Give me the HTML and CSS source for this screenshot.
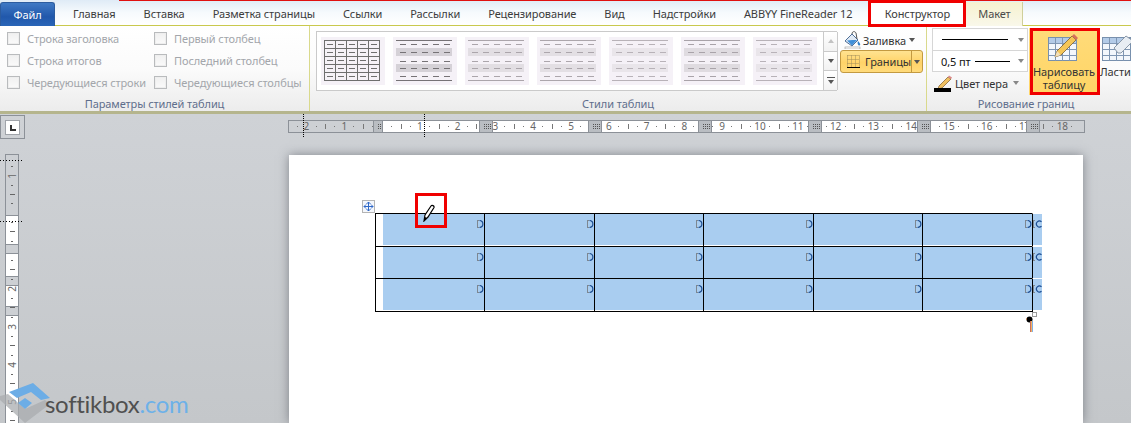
FILE: index.html
```html
<!DOCTYPE html>
<html lang="ru">
<head>
<meta charset="utf-8">
<title>Word</title>
<link rel="stylesheet" href="styles.css">
</head>
<body>
<svg class="defs" width="0" height="0">
  <symbol id="th-band" viewBox="0 0 64 48">
    <rect class="sb" x="3" y="11" width="56" height="8"/>
    <rect class="sb" x="3" y="27" width="56" height="8"/>
    <path class="sl" d="M3 3.500H59M3 43.500H59"/>
    <path class="sd" d="M7 7.500H57M7 15.500H57M7 24.500H57M7 31.500H57M7 39.500H57"/>
  </symbol>
  <symbol id="th-grid" viewBox="0 0 64 48">
    <path class="sl" d="M3 3.500H59M3 11.500H59M3 19.500H59M3 27.500H59M3 35.500H59M3 43.500H59M3.500 3V44M14.500 3V44M25.500 3V44M36.500 3V44M47.500 3V44M58.500 3V44"/>
    <path class="sd" d="M6 7.500H57M6 15.500H57M6 23.500H57M6 31.500H57M6 39.500H57"/>
  </symbol>
  <symbol id="mark" viewBox="0 0 7 8">
    <path d="M0 .5H2M0 7.500H2M.5 1V7" fill="none" stroke="#7d8791"/>
    <path d="M2.500 .5C7 1 7 7 2.500 7.500" fill="none" stroke="#1c4d92" stroke-width="1.200"/>
  </symbol>
  <symbol id="mark2" viewBox="0 0 9 8">
    <path d="M0 .5H2M0 7.500H2M.5 1V7" fill="none" stroke="#7d8791"/>
    <path d="M8.500 1.800A3 3 0 1 0 8.500 6.200" fill="none" stroke="#1c4d92" stroke-width="1.200"/>
  </symbol>
  <symbol id="tbl" viewBox="0 0 30 25">
    <rect x=".5" y=".5" width="28" height="23" fill="#f3f7fc" stroke="#7890ad"/>
    <rect x="1" y="1" width="27" height="5" fill="#b3cbe8"/>
    <path d="M.5 6.500H28.500M.5 12.500H28.500M.5 18.500H28.500M7.500 1V24M14.500 1V24M21.500 1V24" stroke="#7f96b3" fill="none"/>
  </symbol>
</svg>

<header class="tabs">
  <div class="redline"></div>
  <span class="tab file">Файл</span>
  <span class="tab">Главная</span>
  <span class="tab">Вставка</span>
  <span class="tab">Разметка страницы</span>
  <span class="tab">Ссылки</span>
  <span class="tab">Рассылки</span>
  <span class="tab">Рецензирование</span>
  <span class="tab">Вид</span>
  <span class="tab">Надстройки</span>
  <span class="tab">ABBYY FineReader 12</span>
  <span class="tab active">Конструктор</span>
  <span class="tab ctx">Макет</span>
</header>

<section class="ribbon">
  <div class="group g1">
    <div class="gbody checks">
      <label class="chk"><i></i>Строка заголовка</label>
      <label class="chk"><i></i>Первый столбец</label>
      <label class="chk"><i></i>Строка итогов</label>
      <label class="chk"><i></i>Последний столбец</label>
      <label class="chk"><i></i>Чередующиеся строки</label>
      <label class="chk"><i></i>Чередующиеся столбцы</label>
    </div>
    <div class="glabel">Параметры стилей таблиц</div>
  </div>

  <div class="group g2">
    <div class="gbody styles">
      <div class="gallery">
        <div class="thumbs">
          <svg class="thumb t-grid"><use href="#th-grid"/></svg>
          <svg class="thumb t-dark"><use href="#th-band"/></svg>
          <svg class="thumb t-light"><use href="#th-band"/></svg>
          <svg class="thumb t-mid"><use href="#th-band"/></svg>
          <svg class="thumb t-pale"><use href="#th-band"/></svg>
          <svg class="thumb t-mid2"><use href="#th-band"/></svg>
          <svg class="thumb t-pale"><use href="#th-band"/></svg>
        </div>
        <div class="gscroll">
          <span class="gs up"><b class="arr-up"></b></span>
          <span class="gs"><b class="arr"></b></span>
          <span class="gs more"><b class="bar"></b><b class="arr"></b></span>
        </div>
      </div>
      <div class="fillcol">
        <div class="fill">
          <svg class="ico-bucket" viewBox="0 0 18 18" width="18" height="18">
            <path d="M1 10L8 3l6 6-6 6z" fill="#dfe9f5" stroke="#4f6f97"/>
            <path d="M3 9.500L8.500 9 13 9l-5 5.500z" fill="#3f8fd8"/>
            <path d="M8 3c0-3 3-3 4-1l1 6" fill="none" stroke="#555"/>
            <path d="M14 10c2 2 3 4 1.500 4.500S13 12 14 10z" fill="#2f7fc8"/>
            <rect x="1" y="16" width="15" height="2" fill="#fff" stroke="#999" stroke-width=".6"/>
          </svg>
          <span>Заливка</span><b class="arr"></b>
        </div>
        <div class="borders">
          <div class="bmain">
            <svg class="ico-borders" viewBox="0 0 13 13" width="13" height="13">
              <path d="M.5 .5H12.500M.5 4.500H12.500M.5 8.500H12.500M.5 .5V12M4.500 .5V12M8.500 .5V12M12.500 .5V12" fill="none" stroke="#a08c58" stroke-dasharray="1 1"/>
              <path d="M0 12.500H13" stroke="#000"/>
            </svg>
            <span>Границы</span>
          </div>
          <div class="bsplit"><b class="arr"></b></div>
        </div>
      </div>
    </div>
    <div class="glabel">Стили таблиц</div>
  </div>

  <div class="group g3">
    <div class="gbody draw">
      <div class="pencol">
        <div class="penbox">
          <div class="penrow"><span class="pline wide"></span><b class="arr"></b></div>
          <div class="penrow"><span class="ptext">0,5 пт</span><span class="pline"></span><b class="arr"></b></div>
        </div>
        <div class="pencolor">
          <svg class="ico-pen" viewBox="0 0 18 17" width="18" height="17">
            <path d="M5 11L14 2l3 2-9 9-4 1z" fill="#f0c060" stroke="#8a6a3a" stroke-width=".8"/>
            <path d="M14 2l3 2 1-1.500-3-2z" fill="#d88"/>
            <rect x="0" y="13" width="17" height="4" fill="#000"/>
          </svg>
          <span>Цвет пера</span><b class="arr"></b>
        </div>
      </div>
      <div class="bigbtn hot">
        <svg class="ico-big" viewBox="0 0 32 28" width="32" height="28">
          <use href="#tbl" x="0" y="3" width="30" height="25"/>
          <path d="M7 23l2-6L24 2l4 4L13 21z" fill="#f5c657" stroke="#7a6030" stroke-width=".8"/>
          <path d="M24 2l4 4 2-2-4-4z" fill="#d8705a"/>
          <path d="M7 23l2-6 4 4z" fill="#f3e0b8"/>
        </svg>
        <span>Нарисовать таблицу</span>
      </div>
      <div class="bigbtn eraser">
        <svg class="ico-big" viewBox="0 0 32 28" width="32" height="28">
          <use href="#tbl" x="0" y="3" width="30" height="25"/>
          <path d="M12 14L24 2l7 5-12 12h-3z" fill="#e8edf3" stroke="#8a98a8"/>
        </svg>
        <span>Ласти</span>
      </div>
    </div>
    <div class="glabel">Рисование границ</div>
  </div>
</section>

<main class="workspace">
  <aside class="leftcol">
    <div class="corner"><span class="cornerin"><b class="ell"></b></span></div>
    <div class="vruler">
      <span class="vcm"><em>1</em></span>
      <span class="vcm"></span>
      <span class="vcm"></span>
      <span class="vcm"><em>2</em></span>
      <span class="vcm"><em>3</em></span>
      <span class="vcm"><em>4</em></span>
      <span class="vcm"><em>5</em></span>
    </div>
  </aside>
  <div class="maincol">
    <div class="hruler">
      <span class="cm">2</span><span class="cm">1</span><span class="cm"></span><span class="cm">1</span><span class="cm">2</span><span class="cm">3</span><span class="cm">4</span><span class="cm">5</span><span class="cm">6</span><span class="cm">7</span><span class="cm">8</span><span class="cm">9</span><span class="cm">10</span><span class="cm">11</span><span class="cm">12</span><span class="cm">13</span><span class="cm">14</span><span class="cm">15</span><span class="cm">16</span><span class="cm">17</span><span class="cm">18</span>
      <i class="mk m0"></i><i class="mk m1"></i><i class="mk m2"></i><i class="mk m3"></i><i class="mk m4"></i><i class="mk m5"></i><i class="mk m6"></i>
    </div>
    <div class="page">
      <div class="tablewrap">
        <span class="handle">
          <svg viewBox="0 0 11 11" width="11" height="11"><path d="M5.500 1V10M1 5.500H10M3.500 3l2-2 2 2M3.500 8l2 2 2-2M3 3.500l-2 2 2 2M8 3.500l2 2-2 2" fill="none" stroke="#2f68c8"/></svg>
        </span>
        <div class="tgrid">
          <div class="c first"><div class="sel"><svg class="mk1"><use href="#mark"/></svg></div></div>
          <div class="c"><div class="sel"><svg class="mk1"><use href="#mark"/></svg></div></div>
          <div class="c"><div class="sel"><svg class="mk1"><use href="#mark"/></svg></div></div>
          <div class="c"><div class="sel"><svg class="mk1"><use href="#mark"/></svg></div></div>
          <div class="c"><div class="sel"><svg class="mk1"><use href="#mark"/></svg></div></div>
          <div class="c"><div class="sel"><svg class="mk1"><use href="#mark"/></svg></div></div>
          <div class="c end"><div class="sel"><svg class="mk2"><use href="#mark2"/></svg></div></div>
          <div class="c first"><div class="sel"><svg class="mk1"><use href="#mark"/></svg></div></div>
          <div class="c"><div class="sel"><svg class="mk1"><use href="#mark"/></svg></div></div>
          <div class="c"><div class="sel"><svg class="mk1"><use href="#mark"/></svg></div></div>
          <div class="c"><div class="sel"><svg class="mk1"><use href="#mark"/></svg></div></div>
          <div class="c"><div class="sel"><svg class="mk1"><use href="#mark"/></svg></div></div>
          <div class="c"><div class="sel"><svg class="mk1"><use href="#mark"/></svg></div></div>
          <div class="c end"><div class="sel"><svg class="mk2"><use href="#mark2"/></svg></div></div>
          <div class="c first last"><div class="sel"><svg class="mk1"><use href="#mark"/></svg></div></div>
          <div class="c last"><div class="sel"><svg class="mk1"><use href="#mark"/></svg></div></div>
          <div class="c last"><div class="sel"><svg class="mk1"><use href="#mark"/></svg></div></div>
          <div class="c last"><div class="sel"><svg class="mk1"><use href="#mark"/></svg></div></div>
          <div class="c last"><div class="sel"><svg class="mk1"><use href="#mark"/></svg></div></div>
          <div class="c last"><div class="sel"><svg class="mk1"><use href="#mark"/></svg></div></div>
          <div class="c end"><div class="sel"><svg class="mk2"><use href="#mark2"/></svg></div></div>
        </div>
        <svg class="tend" viewBox="0 0 12 21" width="12" height="21">
          <rect x="6.500" y=".5" width="4" height="4" fill="#fff" stroke="#999"/>
          <circle cx="3.500" cy="7.500" r="3" fill="#000"/>
          <path d="M0 7h1" stroke="#e8803a"/>
          <path d="M4.500 9V20" stroke="#c87060"/>
          <path d="M5.500 9V20" stroke="#f0b060"/>
          <path d="M6.500 9V20" stroke="#80b0e8"/>
        </svg>
      </div>
    </div>
  </div>
</main>

<i class="dot-v d1"></i><i class="dot-v d2"></i><i class="dot-h d3"></i><i class="dot-h d4"></i>
<i class="redbox rb-tab"></i><i class="redbox rb-btn"></i><i class="redbox rb-cur"></i>
<svg class="cursor" viewBox="0 0 12 18" width="12" height="18">
  <path d="M1 17l1-6L8 2c1-1.500 3.500 0 3 1.500L5 13z" fill="#fff" stroke="#000" stroke-width="1.200"/>
  <path d="M1 17l1-4 2 1z" fill="#000"/>
</svg>

<div class="wm">
  <svg viewBox="0 0 52 43" width="52" height="43">
    <path d="M0 16l8-2 17 15 20-9 5 4-25 19L0 20z" fill="#a9acaf" opacity=".75"/>
    <path d="M9 12L33 3l17 15-9 2-10-8-14 6z" fill="#6cade6"/>
    <path d="M18 23l7-5 7 5-7 6z" fill="#6cade6"/>
  </svg>
  <span class="wmtext">softikbox<span class="wmdot">.com</span></span>
</div>
</body>
</html>
```

FILE: styles.css
```css
* { box-sizing: border-box; }
html, body { margin: 0; padding: 0; }
body {
  position: relative;
  width: 1131px;
  height: 423px;
  overflow: hidden;
  font-family: "Noto Sans", "Open Sans", sans-serif;
  font-size: 11px;
  letter-spacing: -.1px;
  background: #c9ccd0;
}
.defs { position: absolute; }
.sl { fill: none; stroke: var(--ln); }
.sb { fill: var(--bd); }
.sd { fill: none; stroke: var(--ln); stroke-dasharray: 6 5; }

/* tabs */
.tabs {
  position: relative;
  display: flex;
  height: 26px;
  padding-top: 2px;
  border-bottom: 1px solid #c9c94e;
  background: linear-gradient(#dfebf6, #f6fafd 50%, #fff);
  color: #3c3c3c;
  white-space: nowrap;
}
.redline {
  position: absolute;
  left: 119px;
  right: 0;
  top: 0;
  height: 1px;
  background: #e01010;
}
.tab {
  display: block;
  padding: 3px 14px 0;
  height: 24px;
  line-height: 17px;
}
.tab.file {
  width: 55px;
  margin: 0 4px 0 0;
  padding: 3px 0 0;
  text-align: center;
  color: #fff;
  border-radius: 3px 3px 0 0;
  background: linear-gradient(#3f79c4, #2158ab 60%, #2a66b8);
  border: 1px solid #2c5c9f;
  border-bottom: 0;
}
.tab.active {
  width: 98px;
  margin-left: 2px;
  background: #fff;
  text-align: center;
  padding-left: 0;
  padding-right: 0;
}
.tab.ctx {
  width: 57px;
  padding: 3px 0 0;
  text-align: center;
  background: linear-gradient(#f6f1cf, #f9f8ea);
  border-right: 1px solid #cfcf9a;
  color: #4a4a4a;
}

/* ribbon */
.ribbon {
  display: flex;
  height: 88px;
  border-bottom: 3px solid #b5b58d;
  background: linear-gradient(#fff, #fbfbfb 50%, #ececec);
}
.group {
  display: flex;
  flex-direction: column;
  height: 85px;
  border-right: 1px solid #d9d98c;
}
.g1 { width: 310px; }
.g2 { width: 617px; }
.g3 { width: 198px; border-right: 0; }
.gbody { height: 70px; flex: none; }
.glabel {
  text-align: center;
  line-height: 15px;
  color: #5f6e8c;
  white-space: nowrap;
}

.checks {
  display: grid;
  grid-template-columns: 147px 1fr;
  grid-auto-rows: 22px;
  padding: 1px 0 0 7px;
}
.chk {
  display: flex;
  align-items: center;
  gap: 7px;
  color: #a3a6ab;
  white-space: nowrap;
}
.chk i {
  width: 13px;
  height: 13px;
  border: 1px solid #b9bbbd;
  background: linear-gradient(#f0f0f0, #fafafa);
  box-shadow: inset 0 0 0 1px #eee;
}

.styles { display: flex; padding: 5px 0 0 6px; }
.gallery {
  display: flex;
  width: 521px;
  height: 60px;
  border: 1px solid #cacaca;
  border-right: 0;
  background: #fff;
}
.thumbs { display: flex; gap: 8px; padding: 5px 0 0 4px; flex: none; width: 506px; }
.thumb {
  width: 64px;
  height: 48px;
  background: #f5f1f7;
}
.t-grid { --ln: #6e6e6e; --bd: none; }
.t-dark { --ln: #767276; --bd: #d5d1d7; }
.t-light { --ln: #aba5ab; --bd: #e2dee3; }
.t-mid { --ln: #aca6ac; --bd: #e3dfe4; }
.t-pale { --ln: #b8b2b8; --bd: #e9e5ea; }
.t-mid2 { --ln: #a9a3a9; --bd: #dfdbe0; }
.gscroll {
  display: flex;
  flex-direction: column;
  width: 15px;
  border: 1px solid #cacaca;
  border-width: 0 1px 0 1px;
  flex: none;
}
.gs {
  flex: 1;
  display: flex;
  flex-direction: column;
  gap: 2px;
  align-items: center;
  justify-content: center;
  border-bottom: 1px solid #cacaca;
  background: linear-gradient(#fff, #f2f2f2);
}
.gs:last-child { border-bottom: 0; }
.arr, .arr-up {
  display: inline-block;
  width: 0;
  height: 0;
  border: 3.5px solid transparent;
  border-bottom-width: 0;
  border-top: 4px solid #555;
}
.arr-up {
  border-top: 0;
  border-bottom: 4px solid #c2c2c2;
}
.bar { display: block; width: 8px; height: 1px; background: #555; }

.fillcol { margin-left: 3px; display: flex; flex-direction: column; }
.fill {
  display: flex;
  align-items: center;
  height: 18px;
  padding-left: 4px;
  color: #333;
  gap: 1px;
}
.fill .arr { margin-left: 2px; }
.borders {
  display: flex;
  width: 83px;
  height: 23px;
  margin-top: 1px;
  border: 1px solid #c39a41;
  border-radius: 3px;
  background: linear-gradient(#ffe391, #ffd368 55%, #ffdb7c);
  color: #333;
}
.bmain { flex: 1; display: flex; align-items: center; padding-left: 6px; gap: 5px; }
.bsplit {
  width: 13px;
  border-left: 1px solid #c39a41;
  display: flex;
  align-items: center;
  justify-content: center;
}

.draw { display: flex; padding: 2px 0 0 5px; }
.pencol { width: 97px; flex: none; }
.penbox { width: 96px; height: 44px; border: 1px solid #d6d6d6; background: #fff; }
.penrow {
  display: flex;
  align-items: center;
  height: 21px;
  padding: 0 2px 0 8px;
  color: #111;
}
.penrow + .penrow { border-top: 1px solid #d6d6d6; }
.penrow .arr { margin-left: auto; border-top-color: #888; margin-right: 1px; }
.pline { display: block; width: 35px; height: 1px; background: #000; margin-left: 4px; }
.pline.wide { width: 66px; margin-left: 1px; }
.pencolor { display: flex; align-items: center; height: 22px; padding: 0 0 0 2px; gap: 3px; color: #333; }
.pencolor .arr { margin-left: 2px; border-top-color: #888; }

.bigbtn {
  display: flex;
  flex-direction: column;
  align-items: center;
  color: #333;
  line-height: 13px;
  text-align: center;
  flex: none;
}
.bigbtn span { display: block; margin-top: 3px; }
.ico-big { flex: none; margin-top: 4px; }
.hot {
  width: 70px;
  height: 67px;
  background: linear-gradient(#ffdb7a, #ffd565);
  padding-top: 2px;
}
.eraser { width: 30px; padding-left: 1px; align-items: flex-start; padding-top: 2px; }
.eraser .ico-big { margin-left: 2px; }

/* workspace */
.workspace {
  display: flex;
  height: 309px;
  background: linear-gradient(#cfd2d6, #c4c7ca);
}
.leftcol { width: 25px; flex: none; padding-top: 1px; }
.corner {
  display: flex;
  align-items: center;
  justify-content: center;
  height: 24px;
  border: 1px solid #8c9198;
}
.cornerin {
  position: relative;
  width: 15px;
  height: 15px;
  background: #fff;
  border: 1px solid #a0a4aa;
}
.ell {
  position: absolute;
  left: 4px;
  top: 4px;
  width: 6px;
  height: 6px;
  border-left: 2px solid #333;
  border-bottom: 2px solid #333;
}
.vruler {
  width: 14px;
  height: 270px;
  margin: 15px 0 0 5px;
  padding-top: 1.600px;
  border: 1px solid #8c9198;
  border-bottom: 0;
  overflow: hidden;
  background: linear-gradient(#cdd0d4 0 60px, #8c9198 60px 61px, #fff 61px 89px, #8c9198 89px 90px, #cdd0d4 90px 98px, #8c9198 98px 99px, #fff 99px 121px, #8c9198 121px 122px, #cdd0d4 122px 130px, #8c9198 130px 131px, #fff 131px 151px, #8c9198 151px 152px, #cdd0d4 152px 160px, #8c9198 160px 161px, #fff 161px);
}
.vcm {
  display: flex;
  align-items: center;
  justify-content: center;
  height: 37.800px;
  color: #666;
  font-size: 10px;
  background-image: linear-gradient(#666, #666), linear-gradient(#666, #666), linear-gradient(#666, #666);
  background-repeat: no-repeat;
  background-size: 5px 1px, 2px 1px, 2px 1px;
  background-position: 4px 37px, 5px 28px, 5px 9px;
}
.vcm em {
  font-style: normal;
  writing-mode: vertical-rl;
  transform: rotate(180deg);
  line-height: 12px;
}

.maincol { flex: 1; min-width: 0; }
.hruler {
  position: relative;
  display: flex;
  width: 797px;
  height: 13px;
  margin: 6px 0 0 262.500px;
  border: 1px solid #8c9198;
  border-width: 1px 0;
  background: linear-gradient(90deg, #cdd0d4 0 94px, #fff 94px 748px, #cdd0d4 748px);
  font-size: 10px;
  line-height: 11px;
  color: #666;
}
.hruler::after {
  content: "";
  position: absolute;
  inset: -1px 0;
  border: 1px solid #8c9198;
  border-width: 0 1px;
}
.cm {
  flex: 0 0 37.800px;
  text-align: center;
  background-image: linear-gradient(#777, #777), linear-gradient(#777, #777), linear-gradient(#777, #777);
  background-repeat: no-repeat;
  background-size: 1px 5px, 1px 1px, 1px 1px;
  background-position: 0 3px, 9px 5px, 28px 5px;
}
.mk {
  position: absolute;
  top: 0;
  width: 14px;
  height: 11px;
  background:
    repeating-linear-gradient(#b9bdc2 0 1px, transparent 1px 2px) 4px 2px / 7px 7px no-repeat,
    repeating-linear-gradient(90deg, #555 0 1px, #b9bdc2 1px 2px) 4px 2px / 7px 7px no-repeat,
    #b9bdc2;
  border: 1px solid #8c9198;
  border-width: 0 1px;
}
.m0 { left: 85px; width: 10px; }
.m1 { left: 191px; }
.m2 { left: 300px; }
.m3 { left: 410px; }
.m4 { left: 520px; }
.m5 { left: 629px; }
.m6 { left: 738px; }

.page {
  width: 794px;
  height: 268px;
  margin: 22px 0 0 264px;
  padding: 58px 0 0 86px;
  background: #fff;
  box-shadow: 0 0 10px rgba(70, 72, 82, .55);
}
.tablewrap { position: relative; width: 668px; }
.tgrid {
  display: grid;
  grid-template-columns: 109px 110px 109px 110px 109px 110px 10px;
  grid-template-rows: 33px 32px 34px;
}
.c {
  border-top: 1px solid #000;
  border-left: 1px solid #000;
}
.c.last { border-bottom: 1px solid #000; }
.c.end { border-top-color: transparent; border-bottom: 0; }
.sel {
  display: flex;
  justify-content: flex-end;
  align-items: flex-start;
  height: 31px;
  padding-top: 6px;
  background: #a9cdf0;
}
.first .sel { margin-left: 7px; }
.mk1 { width: 7px; height: 8px; }
.mk2 { width: 9px; height: 8px; }
.handle {
  position: absolute;
  left: -13px;
  top: -13px;
  display: flex;
  align-items: center;
  justify-content: center;
  width: 13px;
  height: 13px;
  background: #f4f7fc;
  border: 1px solid #b4b4b4;
}
.tend { position: absolute; left: 651px; top: 99px; }

/* overlays */
.dot-v, .dot-h { position: absolute; display: block; }
.dot-v { top: 114px; height: 24px; width: 1px; background: repeating-linear-gradient(#000 0 1px, transparent 1px 2px); }
.dot-h { left: 0; width: 24px; height: 1px; background: repeating-linear-gradient(90deg, #000 0 1px, transparent 1px 3px); }
.d1 { left: 303px; }
.d2 { left: 424px; }
.d3 { top: 160px; }
.d4 { top: 221px; }

.redbox { position: absolute; display: block; border: 3px solid #f00000; }
.rb-tab { left: 868px; top: 0; width: 98px; height: 27px; }
.rb-btn { left: 1030px; top: 28px; width: 70px; height: 67px; }
.rb-cur { left: 415px; top: 193px; width: 32px; height: 35px; }
.cursor { position: absolute; left: 423px; top: 204px; }

.wm {
  position: absolute;
  left: 0;
  top: 380px;
  display: flex;
  width: 200px;
  height: 43px;
}
.wmtext {
  position: absolute;
  left: 45px;
  top: 9px;
  font-family: "Lato", sans-serif;
  font-size: 24px;
  line-height: 30px;
  color: #505050;
  letter-spacing: -.3px;
}
.wmdot { color: #6db1e8; }
```
